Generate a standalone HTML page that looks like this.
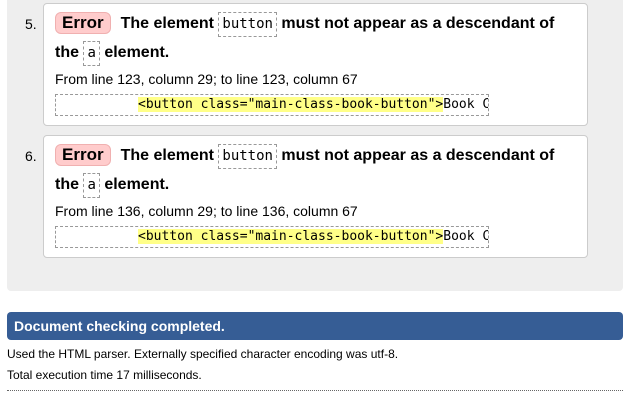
<!DOCTYPE html><html><head><style>
*{margin:0;padding:0;box-sizing:border-box}
body{width:633px;height:411px;background:#fff;font-family:"Liberation Sans",Arial,sans-serif;color:#000;position:relative;overflow:hidden}
.panel{position:absolute;left:7px;top:-5px;width:616px;height:296px;background:#eee;border-radius:4px}
.card{position:absolute;left:43px;width:545px;height:123px;background:#fff;border:1px solid #ccc;border-radius:4px}
.num{position:absolute;left:-19px;top:12px;font-size:14px}
.l1{position:absolute;left:11px;top:8px;font-size:16px;font-weight:bold;white-space:nowrap;line-height:24px}
.l2{position:absolute;left:11px;top:37px;font-size:16px;font-weight:bold;white-space:nowrap;line-height:24px}
.err{display:inline-block;background:#fcc;border:1px solid #f0b0b0;border-radius:6px;padding:0 6px;margin-right:10px;line-height:20px;font-size:17px}
.c{display:inline-block;font-family:"DejaVu Sans Mono",monospace;font-weight:normal;font-size:14px;border:1px dashed #999;padding:2px 3px;line-height:19px}
.from{position:absolute;left:11px;top:67px;font-size:14px}
.code{position:absolute;left:11px;top:90px;width:434px;height:22px;border:1px dashed #999;font-family:"DejaVu Sans Mono",monospace;font-size:13px;padding-left:82px;line-height:20px;white-space:nowrap;overflow:hidden}
.code span{background:#ff8}
.bar{position:absolute;left:7px;top:312px;width:616px;height:28px;background:#365d95;border-radius:4px;color:#fff;font-weight:bold;font-size:14px;padding-left:7px;line-height:28px}
.t{position:absolute;left:7px;font-size:12px}
.hr{position:absolute;left:7px;top:390px;width:616px;border-top:1px dotted #666}
</style></head><body>
<div class="panel"></div>
<div class="card" style="top:3px"><div class="num">5.</div>
<div class="l1"><span class="err">Error</span>The element <span class="c">button</span> must not appear as a descendant of</div>
<div class="l2">the <span class="c">a</span> element.</div>
<div class="from">From line 123, column 29; to line 123, column 67</div>
<div class="code"><span>&lt;button class="main-class-book-button"&gt;</span>Book C</div></div>
<div class="card" style="top:135px"><div class="num">6.</div>
<div class="l1"><span class="err">Error</span>The element <span class="c">button</span> must not appear as a descendant of</div>
<div class="l2">the <span class="c">a</span> element.</div>
<div class="from">From line 136, column 29; to line 136, column 67</div>
<div class="code"><span>&lt;button class="main-class-book-button"&gt;</span>Book C</div></div>
<div class="bar">Document checking completed.</div>
<div class="t" style="top:347px">Used the HTML parser. Externally specified character encoding was utf-8.</div>
<div class="t" style="top:368px">Total execution time 17 milliseconds.</div>
<div class="hr"></div>
</body></html>
